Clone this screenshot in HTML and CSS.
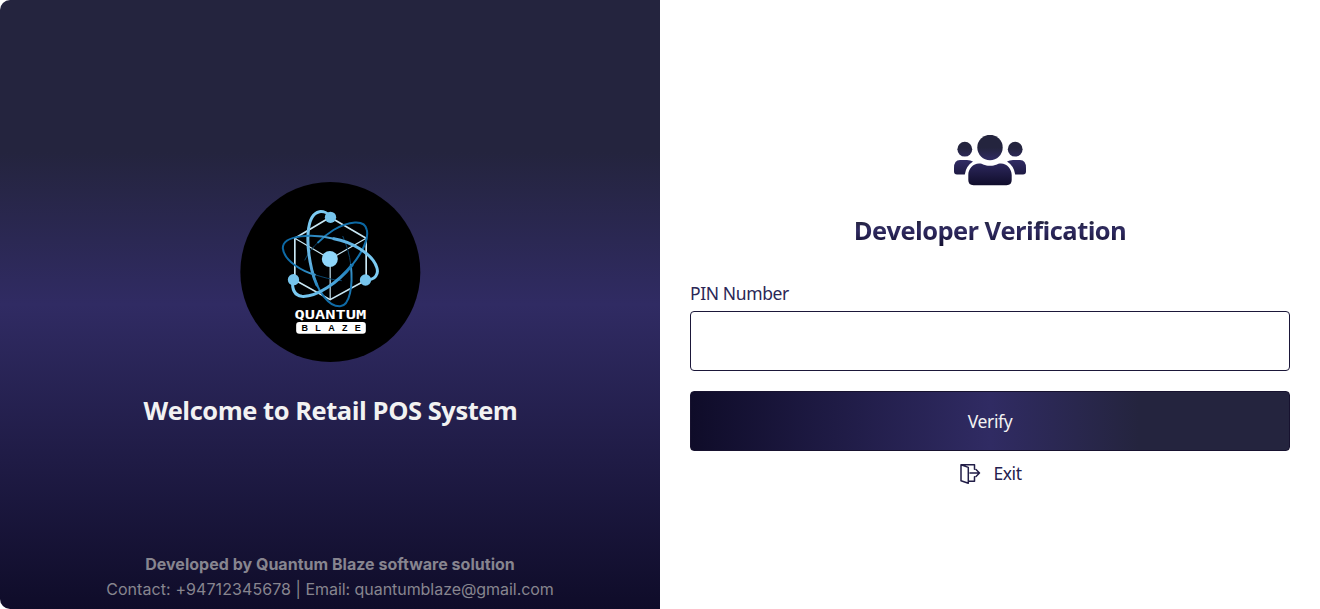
FILE: index.html
```html
<!DOCTYPE html>
<html lang="en">
<head>
<meta charset="utf-8">
<title>Developer Verification</title>
<link rel="stylesheet" href="styles.css">
</head>
<body>
<main class="window">
  <section class="brand">
    <div class="brand-center">
      <svg class="logo" viewBox="-89.5 -54 540 540" role="img" aria-label="Quantum Blaze">
        <defs>
          <linearGradient id="orbit-a" gradientUnits="userSpaceOnUse" x1="150" y1="30" x2="220" y2="320"><stop offset="0" stop-color="#7dccf3"/><stop offset=".5" stop-color="#62b2e2"/><stop offset=".75" stop-color="#2583bd"/><stop offset="1" stop-color="#0b67a3"/></linearGradient>
          <linearGradient id="orbit-b" gradientUnits="userSpaceOnUse" x1="80" y1="290" x2="280" y2="75"><stop offset="0" stop-color="#7dccf3"/><stop offset=".35" stop-color="#4aa5da"/><stop offset=".6" stop-color="#1979b4"/><stop offset="1" stop-color="#0b67a3"/></linearGradient>
          <linearGradient id="orbit-c" gradientUnits="userSpaceOnUse" x1="320" y1="200" x2="40" y2="140"><stop offset="0" stop-color="#7dccf3"/><stop offset=".5" stop-color="#55aadd"/><stop offset=".8" stop-color="#1979b4"/><stop offset="1" stop-color="#0b67a3"/></linearGradient>
        </defs>
        <circle cx="181.5" cy="216" r="270"/>
        <g fill="none" stroke="#c9e8f5" stroke-width="5">
          <path d="M75 240V115L181 52 289 115V240L181 299Z"/>
          <path d="M75 115 181 177 289 115M181 177V299" stroke-width="3.5"/>
        </g>
        <g fill="none" stroke-linecap="round">
          <path d="M243 195C239 163 231 136 219 109" stroke="#0b456b" stroke-width="3"/>
          <path d="M105 180C116 157 128 142 145 127" stroke="#0b456b" stroke-width="3"/>
          <path d="M215 242C184 239 160 232 135 224" stroke="#0b456b" stroke-width="3"/>
          <path d="M126 210C142 275 178 321 211 319C240 317 250 258 243 195" stroke="url(#orbit-a)" stroke-width="6"/>
          <path d="M181 50C175 38 160 34 149 35C107 43 108 134 126 210Q132 235 141 255" stroke="url(#orbit-a)" stroke-width="9"/>
          <path d="M247 195C275 160 297 118 291 90C285 56 235 64 191 90Q168 104 145 127" stroke="url(#orbit-b)" stroke-width="6"/>
          <path d="M69 239C66 265 73 286 96 289C141 292 205 247 247 195" stroke="url(#orbit-b)" stroke-width="9"/>
          <path d="M192 116C132 101 38 103 39 145C43 184 100 215 135 224" stroke="url(#orbit-c)" stroke-width="6"/>
          <path d="M287 241C318 239 327 222 321 203C308 159 240 124 192 116" stroke="url(#orbit-c)" stroke-width="9"/>
        </g>
        <g fill="#76c4ec"><circle cx="182" cy="52" r="17"/><circle cx="71" cy="239" r="17"/><circle cx="287" cy="240" r="17"/></g>
        <circle cx="180" cy="177" r="24" fill="#8fd6fa"/>
        <text class="mark-top" x="74" y="357" textLength="215" lengthAdjust="spacingAndGlyphs">QUANTUM</text>
        <rect x="79" y="366" width="209" height="35" rx="9" fill="#fff"/>
        <text class="mark-bottom" x="95" y="393" textLength="178">BLAZE</text>
      </svg>
      <h1 class="welcome">Welcome to Retail POS System</h1>
    </div>
    <footer class="credits">
      <strong class="credit-name">Developed by Quantum Blaze software solution</strong>
      <span class="credit-contact"><span class="phone">Contact: +94712345678</span> | <span class="email">Email: quantumblaze@gmail.com</span></span>
    </footer>
  </section>
  <section class="verification">
    <svg class="people" viewBox="0 0 72 51" aria-hidden="true">
      <defs><linearGradient id="ink" gradientUnits="userSpaceOnUse" x1="0" y1="0" x2="0" y2="51"><stop offset=".25" stop-color="#24243e"/><stop offset=".5" stop-color="#302b63"/><stop offset="1" stop-color="#0f0c29"/></linearGradient></defs>
      <g fill="url(#ink)">
        <circle cx="36" cy="12.5" r="12.7"/><circle cx="10.8" cy="14.2" r="7.4"/><circle cx="61.2" cy="14.2" r="7.4"/>
        <path d="M6 25H13Q16.500 25 19 26.600Q12 31 10.800 39.500H3Q0 39.500 0 36.500V33Q0 25 6 25Z"/>
        <path d="M66 25H59Q55.500 25 53 26.600Q60 31 61.200 39.500H69Q72 39.500 72 36.500V33Q72 25 66 25Z"/>
        <path d="M25 28.500C29 28.500 30 30.800 36 30.800S43 28.500 47 28.500C53 28.500 57.700 34 57.700 40V45Q57.700 50.200 52.500 50.200H19.500Q14.300 50.200 14.300 45V40C14.300 34 19 28.500 25 28.500Z"/>
      </g>
    </svg>
    <h2 class="title">Developer Verification</h2>
    <form class="pin-form">
      <label class="pin-label" for="pin">PIN Number</label>
      <input class="pin-input" id="pin" type="password">
      <button class="verify" type="button"><span class="verify-text">Verify</span></button>
    </form>
    <button class="exit" type="button">
      <svg class="exit-icon" viewBox="0 0 22 22" aria-hidden="true"><path d="M2 1.700 9.300 4.400V20.300L2 17.800ZM2 1.700H15.500V6.300M15.500 13.700V18.200H9.300M11 10H20.500M17 6.500 20.500 10 17 13.500"/></svg>
      <span class="exit-text">Exit</span>
    </button>
  </section>
</main>
</body>
</html>
```
FILE: styles.css
```css
* { box-sizing: border-box; }
body { margin: 0; background: #fff; font-family: "Noto Sans", "Open Sans", sans-serif; }
.window { display: grid; grid-template-columns: 1fr 1fr; height: 609px; overflow: hidden; }
.brand { display: flex; flex-direction: column; border-radius: 10px 0 0 10px; background: linear-gradient(#24243e 25%, #302b63 50%, #0f0c29); color: #f2f2f2; }
.brand-center { flex: 1; display: flex; flex-direction: column; align-items: center; padding-top: 182px; }
.logo { width: 180px; height: 180px; overflow: visible; }
.mark-top { font: bold 38px "DejaVu Sans Mono", monospace; fill: #fff; }
.mark-bottom { font: bold 27px "Liberation Sans", sans-serif; fill: #000; }
.welcome { margin: 30px 0 0 1px; font: 700 25.5px/37px "Open Sans", sans-serif; white-space: nowrap; letter-spacing: -.45px; }
.credits { display: flex; flex-direction: column; align-items: center; height: 57px; font: 16px/25px Inter, sans-serif; color: #87858f; white-space: nowrap; }
.credit-name { font-weight: 700; letter-spacing: .02px; }
.phone { letter-spacing: .08px; }
.email { letter-spacing: -.05px; }
.verification { display: flex; flex-direction: column; align-items: center; padding: 135px 30px 0; color: #24204e; }
.people { width: 72px; height: 51px; }
.title { margin: 26px 0 0; font: 700 25.5px/36px "Open Sans", sans-serif; white-space: nowrap; letter-spacing: -.57px; background: linear-gradient(#24243e 25%, #302b63 50%, #0f0c29); -webkit-background-clip: text; background-clip: text; color: transparent; }
.pin-form { display: flex; flex-direction: column; width: 600px; margin-top: 33px; }
.pin-label { font-size: 17.5px; letter-spacing: -.38px; line-height: 24px; color: #2b2756; }
.pin-input { height: 60px; margin-top: 6px; border: 1px solid #1b1739; border-radius: 4px; background: #fff; padding: 0 15px; font-size: 18px; }
.verify { height: 60px; margin-top: 20px; padding: 0; border: 1px solid #17122f; border-radius: 4px; background: linear-gradient(to left, #24243e 25%, #302b63 50%, #0f0c29); color: #f2f2f2; font: 17.5px/24px "Noto Sans", sans-serif; letter-spacing: -.4px; }
.exit { display: flex; align-items: center; gap: 12px; margin-top: 10px; padding: 0 0 0 1px; border: 0; background: none; color: #24204e; font: 17.5px/24px "Noto Sans", sans-serif; letter-spacing: -.4px; }
.exit-text { padding-bottom: 2px; }
.exit-icon { width: 22px; height: 22px; fill: none; stroke: #211d47; stroke-width: 1.5; stroke-linejoin: round; stroke-linecap: round; }
```
